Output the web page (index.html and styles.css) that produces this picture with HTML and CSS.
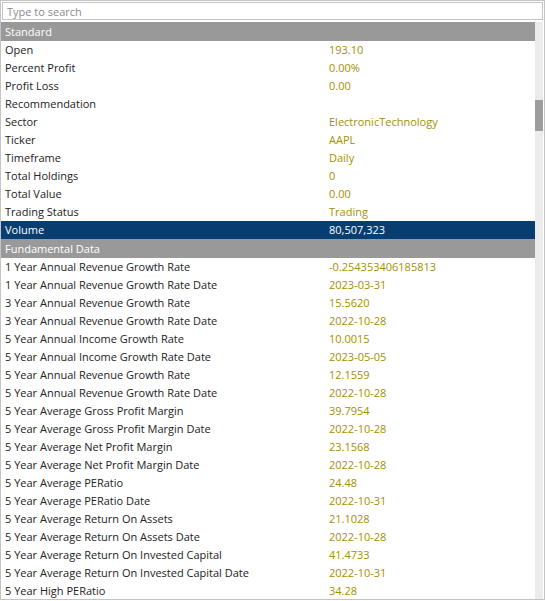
FILE: index.html
```html
<!DOCTYPE html>
<html>
<head>
<meta charset="utf-8">
<link rel="stylesheet" href="styles.css">
</head>
<body>
<div class="panel">
  <div class="search-wrap"><input class="search" type="text" placeholder="Type to search"></div>
  <div class="body">
    <div class="list">
      <div class="group">Standard</div>
      <div class="row"><span class="k">Open</span><span class="v">193.10</span></div>
      <div class="row"><span class="k">Percent Profit</span><span class="v">0.00%</span></div>
      <div class="row"><span class="k">Profit Loss</span><span class="v">0.00</span></div>
      <div class="row"><span class="k">Recommendation</span><span class="v"></span></div>
      <div class="row"><span class="k">Sector</span><span class="v">ElectronicTechnology</span></div>
      <div class="row"><span class="k">Ticker</span><span class="v">AAPL</span></div>
      <div class="row"><span class="k">Timeframe</span><span class="v">Daily</span></div>
      <div class="row"><span class="k">Total Holdings</span><span class="v">0</span></div>
      <div class="row"><span class="k">Total Value</span><span class="v">0.00</span></div>
      <div class="row"><span class="k">Trading Status</span><span class="v">Trading</span></div>
      <div class="row selected"><span class="k">Volume</span><span class="v">80,507,323</span></div>
      <div class="group">Fundamental Data</div>
      <div class="row"><span class="k">1 Year Annual Revenue Growth Rate</span><span class="v">-0.254353406185813</span></div>
      <div class="row"><span class="k">1 Year Annual Revenue Growth Rate Date</span><span class="v">2023-03-31</span></div>
      <div class="row"><span class="k">3 Year Annual Revenue Growth Rate</span><span class="v">15.5620</span></div>
      <div class="row"><span class="k">3 Year Annual Revenue Growth Rate Date</span><span class="v">2022-10-28</span></div>
      <div class="row"><span class="k">5 Year Annual Income Growth Rate</span><span class="v">10.0015</span></div>
      <div class="row"><span class="k">5 Year Annual Income Growth Rate Date</span><span class="v">2023-05-05</span></div>
      <div class="row"><span class="k">5 Year Annual Revenue Growth Rate</span><span class="v">12.1559</span></div>
      <div class="row"><span class="k">5 Year Annual Revenue Growth Rate Date</span><span class="v">2022-10-28</span></div>
      <div class="row"><span class="k">5 Year Average Gross Profit Margin</span><span class="v">39.7954</span></div>
      <div class="row"><span class="k">5 Year Average Gross Profit Margin Date</span><span class="v">2022-10-28</span></div>
      <div class="row"><span class="k">5 Year Average Net Profit Margin</span><span class="v">23.1568</span></div>
      <div class="row"><span class="k">5 Year Average Net Profit Margin Date</span><span class="v">2022-10-28</span></div>
      <div class="row"><span class="k">5 Year Average PERatio</span><span class="v">24.48</span></div>
      <div class="row"><span class="k">5 Year Average PERatio Date</span><span class="v">2022-10-31</span></div>
      <div class="row"><span class="k">5 Year Average Return On Assets</span><span class="v">21.1028</span></div>
      <div class="row"><span class="k">5 Year Average Return On Assets Date</span><span class="v">2022-10-28</span></div>
      <div class="row"><span class="k">5 Year Average Return On Invested Capital</span><span class="v">41.4733</span></div>
      <div class="row"><span class="k">5 Year Average Return On Invested Capital Date</span><span class="v">2022-10-31</span></div>
      <div class="row"><span class="k">5 Year High PERatio</span><span class="v">34.28</span></div>
    </div>
    <div class="track"><div class="thumb"></div></div>
  </div>
</div>
</body>
</html>
```

FILE: styles.css
```css
html, body {
  margin: 0;
  padding: 0;
  background: #ffffff;
}
body {
  font-family: "Open Sans", "Noto Sans", sans-serif;
  font-size: 11px;
  color: #222222;
}
.panel {
  box-sizing: border-box;
  width: 545px;
  height: 600px;
  border: 1px solid #c4c4c4;
  display: flex;
  flex-direction: column;
  overflow: hidden;
}
.search-wrap {
  padding: 1px 1px 2px 1px;
}
.search {
  box-sizing: border-box;
  display: block;
  width: 541px;
  height: 18px;
  margin: 0;
  border: 1px solid #c4c4c4;
  padding: 0 4px;
  font-family: "Open Sans", "Noto Sans", sans-serif;
  font-size: 11px;
  color: #222;
  outline: none;
}
.search::placeholder {
  color: #8a8a8a;
}
.body {
  flex: 1;
  display: flex;
  overflow: hidden;
}
.list {
  width: 534px;
  flex: none;
}
.group {
  height: 19px;
  line-height: 19px;
  background: #999999;
  color: #ffffff;
  padding-left: 4px;
}
.row {
  height: 18px;
  line-height: 18px;
  display: flex;
  white-space: nowrap;
}
.k {
  width: 324px;
  padding-left: 4px;
  flex: none;
}
.v {
  color: #a39000;
}
.selected {
  background: #083d6f;
}
.selected .k, .selected .v {
  color: #ffffff;
}
.track {
  width: 8px;
  background: #ebebeb;
  flex: none;
}
.thumb {
  margin-top: 78px;
  height: 31px;
  background: #9d9d9d;
}
```
